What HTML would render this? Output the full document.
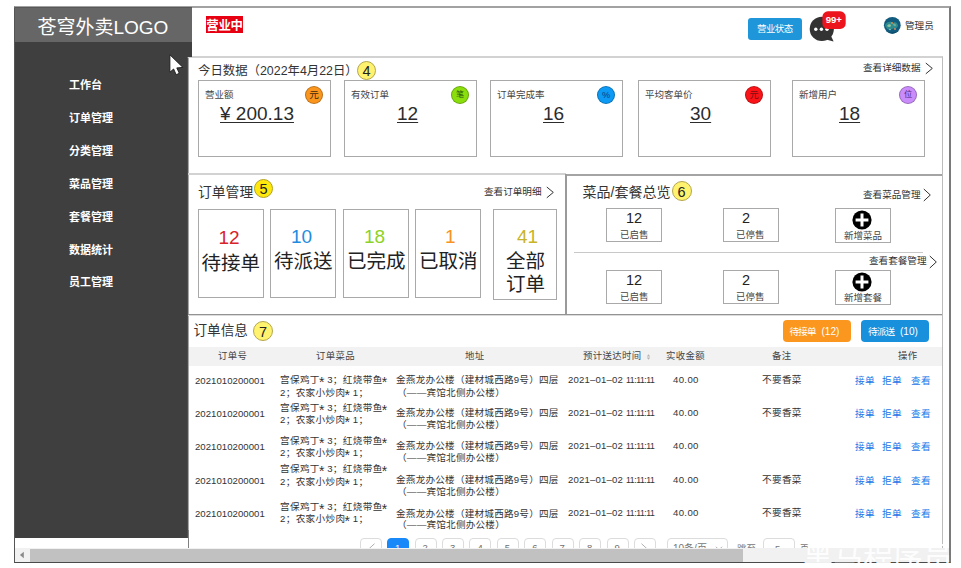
<!DOCTYPE html>
<html>
<head>
<meta charset="utf-8">
<title>苍穹外卖</title>
<style>
html,body{margin:0;padding:0;background:#fff;}
body{width:961px;height:568px;overflow:hidden;position:relative;font-family:"Liberation Sans","Noto Sans CJK SC",sans-serif;color:#333;}
.a{position:absolute;box-sizing:border-box;}
.t{position:absolute;white-space:nowrap;line-height:1;}
.win{left:14px;top:6px;width:937px;height:557px;border:1px solid #4a4a4a;border-width:2px 2px 1px 1px;border-top-color:#a2a2a2;border-right-color:#7a7a7a;border-left-color:#555;background:#fff;}
.logo{left:15px;top:7px;width:177px;height:35px;background:#666;border-top:1px solid #585858;}
.side{left:15px;top:42px;width:177px;height:496px;background:#3f3f3f;}
.menu{color:#fff;font-weight:bold;font-size:11px;left:69px;}
.panel{left:187px;top:56px;width:756px;height:500px;background:#fff;border:1px solid #bcbcbc;border-top:2px solid #d2d2d2;border-left:1px solid #4c4c4c;border-bottom:none;}
.card{top:80px;width:133px;height:77px;border:1px solid #a9a9a9;background:#fff;}
.lbl{font-size:9.5px;color:#444;}
.num{font-size:19px;color:#2c2c2c;text-decoration:underline;text-decoration-thickness:1.2px;text-underline-offset:1.6px;}
.dot{width:18px;height:18px;border-radius:50%;border:1px solid rgba(0,0,0,.25);font-size:9.8px;line-height:16px;text-align:center;color:#222;}
.yc{width:19px;height:19px;border-radius:50%;border:1px solid #b4a64e;background:#fff26e;font-size:14.5px;line-height:19px;text-align:center;color:#222;}
.obox{top:209px;width:66px;height:89px;border:1px solid #a9a9a9;background:#fff;}
.on{font-size:19px;}
.ot{font-size:19.5px;color:#222;}
.sbox{width:56px;height:34px;border:1px solid #a9a9a9;background:#fff;}
.sn{font-size:14.5px;color:#222;}
.sl{font-size:9.5px;color:#444;}
.lnk{font-size:9.6px;color:#333;}
.th{font-size:9.4px;color:#444;letter-spacing:.35px;}
.td{font-size:9.6px;color:#333;letter-spacing:.35px;}
.dg{letter-spacing:.03px;}
.ad{letter-spacing:.22px;}
.as{font-size:14px;line-height:0;vertical-align:-4.2px;letter-spacing:0;margin:0 -.2px 0 -.9px;}
.tm{display:inline-block;letter-spacing:-.45px;transform:scaleX(.9);transform-origin:0 50%;}
.op{font-size:9.6px;color:#2276e8;letter-spacing:.3px;}
.pg{top:538px;width:22px;height:22px;border:1px solid #dcdcdc;border-radius:4px;background:#fff;}
</style>
</head>
<body>
<div class="a win"></div>
<div class="a logo"></div>
<div class="t" style="left:37.5px;top:18px;font-size:19px;color:#fff;">苍穹外卖LOGO</div>
<div class="a side"></div>
<div class="t menu" style="top:80px;">工作台</div>
<div class="t menu" style="top:113px;">订单管理</div>
<div class="t menu" style="top:146px;">分类管理</div>
<div class="t menu" style="top:179px;">菜品管理</div>
<div class="t menu" style="top:211.5px;">套餐管理</div>
<div class="t menu" style="top:244.5px;">数据统计</div>
<div class="t menu" style="top:277px;">员工管理</div>

<!-- header -->
<div class="a" style="left:206px;top:16px;height:17px;width:37px;background:#e60012;box-shadow:0 0 0 .5px rgba(230,0,18,.0);"></div>
<div class="t" style="left:206px;top:17.5px;width:37px;color:#fff;font-weight:bold;font-size:12.4px;line-height:16px;text-align:center;letter-spacing:-.2px;">营业中</div>
<div class="a" style="left:748px;top:18px;width:54px;height:22px;background:#1e96d9;border-radius:3px;"></div>
<div class="t" style="left:757px;top:24px;font-size:9.5px;color:#fff;letter-spacing:-.6px;">营业状态</div>
<svg class="a" style="left:806px;top:8px;" width="44" height="38" viewBox="0 0 44 38">
  <circle cx="15.8" cy="20.9" r="12.1" fill="#333"/>
  <path d="M20 31.5 L27.6 33.4 L24.8 27.5Z" fill="#333"/>
  <circle cx="9.8" cy="21.2" r="1.7" fill="#fff"/><circle cx="15.4" cy="21.2" r="1.7" fill="#fff"/><circle cx="21" cy="21.2" r="1.7" fill="#fff"/>
  <rect x="16.4" y="3.3" width="23.3" height="17.6" rx="5.5" fill="#ec151d"/>
  <text x="27.8" y="15.3" font-size="9.6" font-weight="bold" fill="#fff" text-anchor="middle" font-family="Liberation Sans, sans-serif">99+</text>
</svg>
<svg class="a" style="left:883px;top:16px;" width="19" height="19" viewBox="0 0 19 19">
  <defs><clipPath id="av"><circle cx="9.3" cy="9.3" r="8.4"/></clipPath></defs>
  <g clip-path="url(#av)">
    <rect width="19" height="19" fill="#115c7e"/>
    <path d="M2 9 C4 5 8 5 10 7 C12 5 15 7 15 10 C14 13 11 12 9 13 C6 15 3 13 2 9Z" fill="#2f8a8e"/>
    <path d="M4 10 C5 8 7 8 8 9 C8 11 6 12 4 10Z" fill="#8fc4a0"/>
    <path d="M10 8 C11 7 13 8 13 9.5 C12 11 10.5 10 10 8Z" fill="#6fae9a"/>
    <circle cx="9" cy="7" r="1" fill="#d8884a"/>
    <circle cx="12" cy="13" r="0.9" fill="#e0905a"/>
    <circle cx="7" cy="13.5" r="0.8" fill="#9ccfc0"/>
    <path d="M0 15 C5 17 13 17 19 14 V19 H0Z" fill="#0c4a6a"/>
  </g>
</svg>
<div class="t" style="left:905px;top:21px;font-size:9.6px;color:#333;">管理员</div>

<!-- main panel -->
<div class="a panel"></div>
<div class="a" style="left:188px;top:58px;width:1px;height:472px;background:#a6a6a6;"></div>
<div class="a" style="left:187px;top:56px;width:5px;height:1px;background:#3f3f3f;"></div>
<div class="t" style="left:198px;top:64.5px;font-size:12.4px;color:#333;">今日数据（2022年4月22日）</div>

<div class="t lnk" style="left:863px;top:63px;">查看详细数据</div>
<svg class="a" style="left:924px;top:62px;" width="10" height="13" viewBox="0 0 10 13"><path d="M1.8 1 L8.3 6.4 L1.8 11.8" fill="none" stroke="#333" stroke-width="1"/></svg>
<div class="t yc a" style="left:357px;top:61px;">4</div>

<!-- cards -->
<div class="a card" style="left:198px;"></div>
<div class="t lbl" style="left:205px;top:90px;">营业额</div>
<div class="t dot a" style="left:305px;top:86px;background:#fa961e;color:#40280a;font-size:9.6px;">元</div>
<div class="t num" style="left:220px;top:104px;">¥ 200.13</div>

<div class="a card" style="left:344px;"></div>
<div class="t lbl" style="left:351px;top:90px;">有效订单</div>
<div class="t dot a" style="left:451px;top:86px;background:#8ade0c;color:#2c5a08;font-size:8px;">笔</div>
<div class="t num" style="left:397px;top:104px;">12</div>

<div class="a card" style="left:490px;"></div>
<div class="t lbl" style="left:497px;top:90px;">订单完成率</div>
<div class="t dot a" style="left:597px;top:86px;background:#0c9af4;color:#0c3a8a;font-size:9.2px;">%</div>
<div class="t num" style="left:543px;top:104px;">16</div>

<div class="a card" style="left:638px;"></div>
<div class="t lbl" style="left:645px;top:90px;">平均客单价</div>
<div class="t dot a" style="left:745px;top:86px;background:#fa1418;color:#7a0c10;font-size:9.2px;">元</div>
<div class="t num" style="left:690px;top:104px;">30</div>

<div class="a card" style="left:792px;"></div>
<div class="t lbl" style="left:799px;top:90px;">新增用户</div>
<div class="t dot a" style="left:899px;top:86px;background:#ca8cfa;color:#4c1c7c;font-size:8.2px;">位</div>
<div class="t num" style="left:839px;top:104px;">18</div>

<!-- section 2 -->
<div class="a" style="left:188px;top:173px;width:378px;height:2px;background:#d2d2d2;"></div>
<div class="a" style="left:565px;top:174px;width:377px;height:2px;background:#a4a4a4;"></div>
<div class="a" style="left:565px;top:174px;width:2px;height:141px;background:#9a9a9a;"></div>
<div class="a" style="left:188px;top:314px;width:754px;height:1px;background:#939393;box-shadow:0 1px 0 #dcdcdc;"></div>
<div class="t" style="left:198px;top:185.5px;font-size:13.8px;color:#333;">订单管理</div>
<div class="t yc a" style="left:254px;top:179px;background:#ffe80c;border-color:#b4a21e;">5</div>
<div class="t lnk" style="left:484px;top:187px;">查看订单明细</div>
<svg class="a" style="left:545px;top:186px;" width="10" height="13" viewBox="0 0 10 13"><path d="M1.8 1 L8.3 6.4 L1.8 11.8" fill="none" stroke="#333" stroke-width="1"/></svg>

<div class="a obox" style="left:198px;"></div>
<div class="t on" style="left:218.5px;top:228px;color:#d8232a;">12</div>
<div class="t ot" style="left:201.5px;top:254px;">待接单</div>
<div class="a obox" style="left:270px;"></div>
<div class="t on" style="left:291px;top:227px;color:#1e8ce0;">10</div>
<div class="t ot" style="left:274px;top:252px;">待派送</div>
<div class="a obox" style="left:343px;"></div>
<div class="t on" style="left:364px;top:227px;color:#8cd228;">18</div>
<div class="t ot" style="left:347px;top:252px;">已完成</div>
<div class="a obox" style="left:415px;"></div>
<div class="t on" style="left:445px;top:227px;color:#f7931e;">1</div>
<div class="t ot" style="left:419px;top:252px;">已取消</div>
<div class="a obox" style="left:493px;width:64px;height:91px;"></div>
<div class="t on" style="left:517px;top:227px;color:#c8b428;">41</div>
<div class="t ot" style="left:506px;top:251.5px;">全部</div>
<div class="t ot" style="left:506px;top:275px;">订单</div>

<div class="t" style="left:582.5px;top:184.8px;font-size:14px;color:#333;">菜品/套餐总览</div>
<div class="t yc a" style="left:671.5px;top:181px;width:20px;height:20px;line-height:20px;">6</div>
<div class="t lnk" style="left:863px;top:190px;">查看菜品管理</div>
<svg class="a" style="left:922px;top:188px;" width="10" height="14" viewBox="0 0 10 14"><path d="M1.8 1 L8.3 7 L1.8 13" fill="none" stroke="#333" stroke-width="1"/></svg>
<div class="a" style="left:574px;top:252px;width:349px;height:1px;background:#c8c8c8;"></div>
<div class="t lnk" style="left:869px;top:256px;">查看套餐管理</div>
<svg class="a" style="left:928px;top:255px;" width="10" height="14" viewBox="0 0 10 14"><path d="M1.8 1 L8.3 7 L1.8 13" fill="none" stroke="#333" stroke-width="1"/></svg>

<div class="a sbox" style="left:606px;top:208px;"></div>
<div class="t sn" style="left:626px;top:211px;">12</div>
<div class="t sl" style="left:620px;top:230px;">已启售</div>
<div class="a sbox" style="left:723px;top:208px;"></div>
<div class="t sn" style="left:742px;top:211px;">2</div>
<div class="t sl" style="left:736px;top:230px;">已停售</div>
<div class="a sbox" style="left:835px;top:208px;height:35px;"></div>
<svg class="a" style="left:852px;top:210px;" width="20" height="20" viewBox="0 0 20 20"><circle cx="10" cy="10" r="9.6" fill="#000"/><path d="M10 3.6V16.4M3.6 10H16.4" stroke="#fff" stroke-width="3"/></svg>
<div class="t sl" style="left:844px;top:231px;">新增菜品</div>

<div class="a sbox" style="left:606px;top:270px;"></div>
<div class="t sn" style="left:626px;top:273px;">12</div>
<div class="t sl" style="left:620px;top:292px;">已启售</div>
<div class="a sbox" style="left:723px;top:270px;"></div>
<div class="t sn" style="left:742px;top:273px;">2</div>
<div class="t sl" style="left:736px;top:292px;">已停售</div>
<div class="a sbox" style="left:835px;top:270px;height:35px;"></div>
<svg class="a" style="left:852px;top:272px;" width="20" height="20" viewBox="0 0 20 20"><circle cx="10" cy="10" r="9.6" fill="#000"/><path d="M10 3.6V16.4M3.6 10H16.4" stroke="#fff" stroke-width="3"/></svg>
<div class="t sl" style="left:844px;top:293px;">新增套餐</div>

<!-- section 3 -->
<div class="t" style="left:193.5px;top:324.3px;font-size:13.6px;color:#333;">订单信息</div>
<div class="t yc a" style="left:253px;top:320.5px;width:20px;height:20px;line-height:20px;">7</div>
<div class="a" style="left:783px;top:320px;width:68px;height:22px;background:#fb961e;border-radius:4px;"></div>
<div class="t" style="left:789.5px;top:326.5px;font-size:9.6px;color:#fff;letter-spacing:-.9px;">待接单</div><div class="t" style="left:821.5px;top:327px;font-size:10px;color:#fff;">(12)</div>
<div class="a" style="left:861px;top:320px;width:68px;height:22px;background:#1890dc;border-radius:4px;"></div>
<div class="t" style="left:868px;top:326.5px;font-size:9.6px;color:#fff;letter-spacing:-.9px;">待派送</div><div class="t" style="left:900px;top:327px;font-size:10px;color:#fff;">(10)</div>
<div class="a" style="left:189px;top:347px;width:753px;height:19px;background:#f2f2f2;"></div>
<div class="t th" style="left:218px;top:351px;">订单号</div>
<div class="t th" style="left:316px;top:351px;">订单菜品</div>
<div class="t th" style="left:465px;top:351px;">地址</div>
<div class="t th" style="left:583px;top:351px;">预计送达时间</div>
<svg class="a" style="left:646px;top:353.5px;" width="5" height="6" viewBox="0 0 5 6"><path d="M2.5 0.3L4.2 2.4H0.8Z M2.5 5.7L4.2 3.6H0.8Z" fill="#b4b4b4"/></svg>
<div class="t th" style="left:666px;top:351px;">实收金额</div>
<div class="t th" style="left:772px;top:351px;">备注</div>
<div class="t th" style="left:898px;top:351px;">操作</div>
<div class="t td dg" style="left:195px;top:375.7px;">2021010200001</div>
<div class="t td" style="left:280px;top:374.5px;">宫保鸡丁<span class="as">*</span> 3；红烧带鱼<span class="as">*</span></div>
<div class="t td" style="left:280px;top:387.7px;">2；农家小炒肉<span class="as">*</span> 1；</div>
<div class="t td ad" style="left:396px;top:374.5px;">金燕龙办公楼（建材城西路9号）四层</div>
<div class="t td ad" style="left:397px;top:387.7px;">（——宾馆北侧办公楼）</div>
<div class="t td" style="left:568px;top:374.7px;"><span style="letter-spacing:.17px">2021–01–02</span> <span class="tm">11:11:11</span></div>
<div class="t td" style="left:673px;top:374.7px;">40.00</div>
<div class="t td" style="left:762px;top:374.7px;">不要香菜</div>
<div class="t op" style="left:855px;top:375.7px;">接单</div>
<div class="t op" style="left:882px;top:375.7px;">拒单</div>
<div class="t op" style="left:911px;top:375.7px;">查看</div>
<div class="t td dg" style="left:195px;top:409.0px;">2021010200001</div>
<div class="t td" style="left:280px;top:403.0px;">宫保鸡丁<span class="as">*</span> 3；红烧带鱼<span class="as">*</span></div>
<div class="t td" style="left:280px;top:414.5px;">2；农家小炒肉<span class="as">*</span> 1；</div>
<div class="t td ad" style="left:396px;top:408.4px;">金燕龙办公楼（建材城西路9号）四层</div>
<div class="t td ad" style="left:397px;top:420.1px;">（——宾馆北侧办公楼）</div>
<div class="t td" style="left:568px;top:408.0px;"><span style="letter-spacing:.17px">2021–01–02</span> <span class="tm">11:11:11</span></div>
<div class="t td" style="left:673px;top:408.0px;">40.00</div>
<div class="t td" style="left:762px;top:408.0px;">不要香菜</div>
<div class="t op" style="left:855px;top:409.0px;">接单</div>
<div class="t op" style="left:882px;top:409.0px;">拒单</div>
<div class="t op" style="left:911px;top:409.0px;">查看</div>
<div class="t td dg" style="left:195px;top:442.0px;">2021010200001</div>
<div class="t td" style="left:280px;top:435.8px;">宫保鸡丁<span class="as">*</span> 3；红烧带鱼<span class="as">*</span></div>
<div class="t td" style="left:280px;top:447.7px;">2；农家小炒肉<span class="as">*</span> 1；</div>
<div class="t td ad" style="left:396px;top:441.0px;">金燕龙办公楼（建材城西路9号）四层</div>
<div class="t td ad" style="left:397px;top:452.8px;">（——宾馆北侧办公楼）</div>
<div class="t td" style="left:568px;top:441.0px;"><span style="letter-spacing:.17px">2021–01–02</span> <span class="tm">11:11:11</span></div>
<div class="t td" style="left:673px;top:441.0px;">40.00</div>
<div class="t op" style="left:855px;top:442.0px;">接单</div>
<div class="t op" style="left:882px;top:442.0px;">拒单</div>
<div class="t op" style="left:911px;top:442.0px;">查看</div>
<div class="t td dg" style="left:195px;top:476.3px;">2021010200001</div>
<div class="t td" style="left:280px;top:464px;">宫保鸡丁<span class="as">*</span> 3；红烧带鱼<span class="as">*</span></div>
<div class="t td" style="left:280px;top:476.5px;">2；农家小炒肉<span class="as">*</span> 1；</div>
<div class="t td ad" style="left:396px;top:475.0px;">金燕龙办公楼（建材城西路9号）四层</div>
<div class="t td ad" style="left:397px;top:487.0px;">（——宾馆北侧办公楼）</div>
<div class="t td" style="left:568px;top:475.4px;"><span style="letter-spacing:.17px">2021–01–02</span> <span class="tm">11:11:11</span></div>
<div class="t td" style="left:673px;top:475.4px;">40.00</div>
<div class="t td" style="left:762px;top:475.4px;">不要香菜</div>
<div class="t op" style="left:855px;top:476.3px;">接单</div>
<div class="t op" style="left:882px;top:476.3px;">拒单</div>
<div class="t op" style="left:911px;top:476.3px;">查看</div>
<div class="t td dg" style="left:195px;top:509px;">2021010200001</div>
<div class="t td" style="left:280px;top:501.9px;">宫保鸡丁<span class="as">*</span> 3；红烧带鱼<span class="as">*</span></div>
<div class="t td" style="left:280px;top:514.0px;">2；农家小炒肉<span class="as">*</span> 1；</div>
<div class="t td ad" style="left:396px;top:508.7px;">金燕龙办公楼（建材城西路9号）四层</div>
<div class="t td ad" style="left:397px;top:520.3px;">（——宾馆北侧办公楼）</div>
<div class="t td" style="left:568px;top:508.0px;"><span style="letter-spacing:.17px">2021–01–02</span> <span class="tm">11:11:11</span></div>
<div class="t td" style="left:673px;top:508.0px;">40.00</div>
<div class="t td" style="left:762px;top:508.0px;">不要香菜</div>
<div class="t op" style="left:855px;top:509px;">接单</div>
<div class="t op" style="left:882px;top:509px;">拒单</div>
<div class="t op" style="left:911px;top:509px;">查看</div>
<div class="a pg" style="left:359.7px;"></div>
<svg class="a" style="left:367.2px;top:543px;" width="9" height="12" viewBox="0 0 9 12"><path d="M7.5 0.7L1.7 6L7.5 11.3" fill="none" stroke="#b0b0b0" stroke-width="1"/></svg>
<div class="a pg" style="left:387.1px;background:#1989fa;border-color:#1989fa;"></div>
<div class="t" style="left:395.1px;top:543.3px;font-size:9.5px;color:#fff;">1</div>
<div class="a pg" style="left:414.5px;"></div>
<div class="t" style="left:422.5px;top:543.3px;font-size:9.5px;color:#707070;">2</div>
<div class="a pg" style="left:442.0px;"></div>
<div class="t" style="left:450.0px;top:543.3px;font-size:9.5px;color:#707070;">3</div>
<div class="a pg" style="left:469.4px;"></div>
<div class="t" style="left:477.4px;top:543.3px;font-size:9.5px;color:#707070;">4</div>
<div class="a pg" style="left:496.8px;"></div>
<div class="t" style="left:504.8px;top:543.3px;font-size:9.5px;color:#707070;">5</div>
<div class="a pg" style="left:524.2px;"></div>
<div class="t" style="left:532.2px;top:543.3px;font-size:9.5px;color:#707070;">6</div>
<div class="a pg" style="left:551.6px;"></div>
<div class="t" style="left:559.6px;top:543.3px;font-size:9.5px;color:#707070;">7</div>
<div class="a pg" style="left:579.1px;"></div>
<div class="t" style="left:587.1px;top:543.3px;font-size:9.5px;color:#707070;">8</div>
<div class="a pg" style="left:606.5px;"></div>
<div class="t" style="left:614.5px;top:543.3px;font-size:9.5px;color:#707070;">9</div>
<div class="a pg" style="left:633.9px;"></div>
<svg class="a" style="left:640.4px;top:543px;" width="9" height="12" viewBox="0 0 9 12"><path d="M1.5 0.7L7.3 6L1.5 11.3" fill="none" stroke="#b0b0b0" stroke-width="1"/></svg>
<div class="a pg" style="left:667px;width:61px;"></div>
<svg class="a" style="left:715px;top:546px;" width="8" height="5" viewBox="0 0 8 5"><path d="M1 0.8L4 3.8L7 0.8" fill="none" stroke="#aaa" stroke-width="1"/></svg>
<div class="t" style="left:673px;top:543.6px;font-size:10px;color:#777;">10条/页</div>
<div class="t" style="left:737px;top:543.6px;font-size:9.5px;color:#777;">跳至</div>
<div class="a pg" style="left:763px;width:32px;"></div>
<div class="t" style="left:775px;top:543.6px;font-size:9.5px;color:#777;">5</div>
<div class="t" style="left:800px;top:543.6px;font-size:9.5px;color:#777;">页</div>
<!-- scrollbar -->
<div class="a" style="left:15px;top:538px;width:173px;height:10px;background:#fff;"></div>
<div class="a" style="left:188px;top:530px;width:1px;height:19px;background:#808080;"></div>
<div class="a" style="left:15px;top:548px;width:934px;height:14px;background:#f1f1f1;"></div>
<div class="a" style="left:30px;top:549px;width:713px;height:13px;background:#c1c1c1;"></div>
<svg class="a" style="left:19px;top:551px;" width="6" height="8" viewBox="0 0 6 8"><path d="M4.8 0.8V7.2L0.9 4Z" fill="#8a8a8a"/></svg>
<!-- cursor -->
<svg class="a" style="left:165px;top:50px;" width="24" height="30" viewBox="0 0 24 30"><path d="M4.9 4.8 L4.9 22.2 L8.6 19 L11.2 24.7 L14.3 23.3 L11.8 17.9 L17.9 17.4 Z" fill="#fff" stroke="#1a1a1a" stroke-width="0.9" stroke-linejoin="round"/></svg>
<!-- watermark -->
<div class="t" style="left:803px;top:543px;font-size:30px;font-weight:400;color:rgba(255,255,255,.92);letter-spacing:0px;">黑马程序员</div>
</body>
</html>
